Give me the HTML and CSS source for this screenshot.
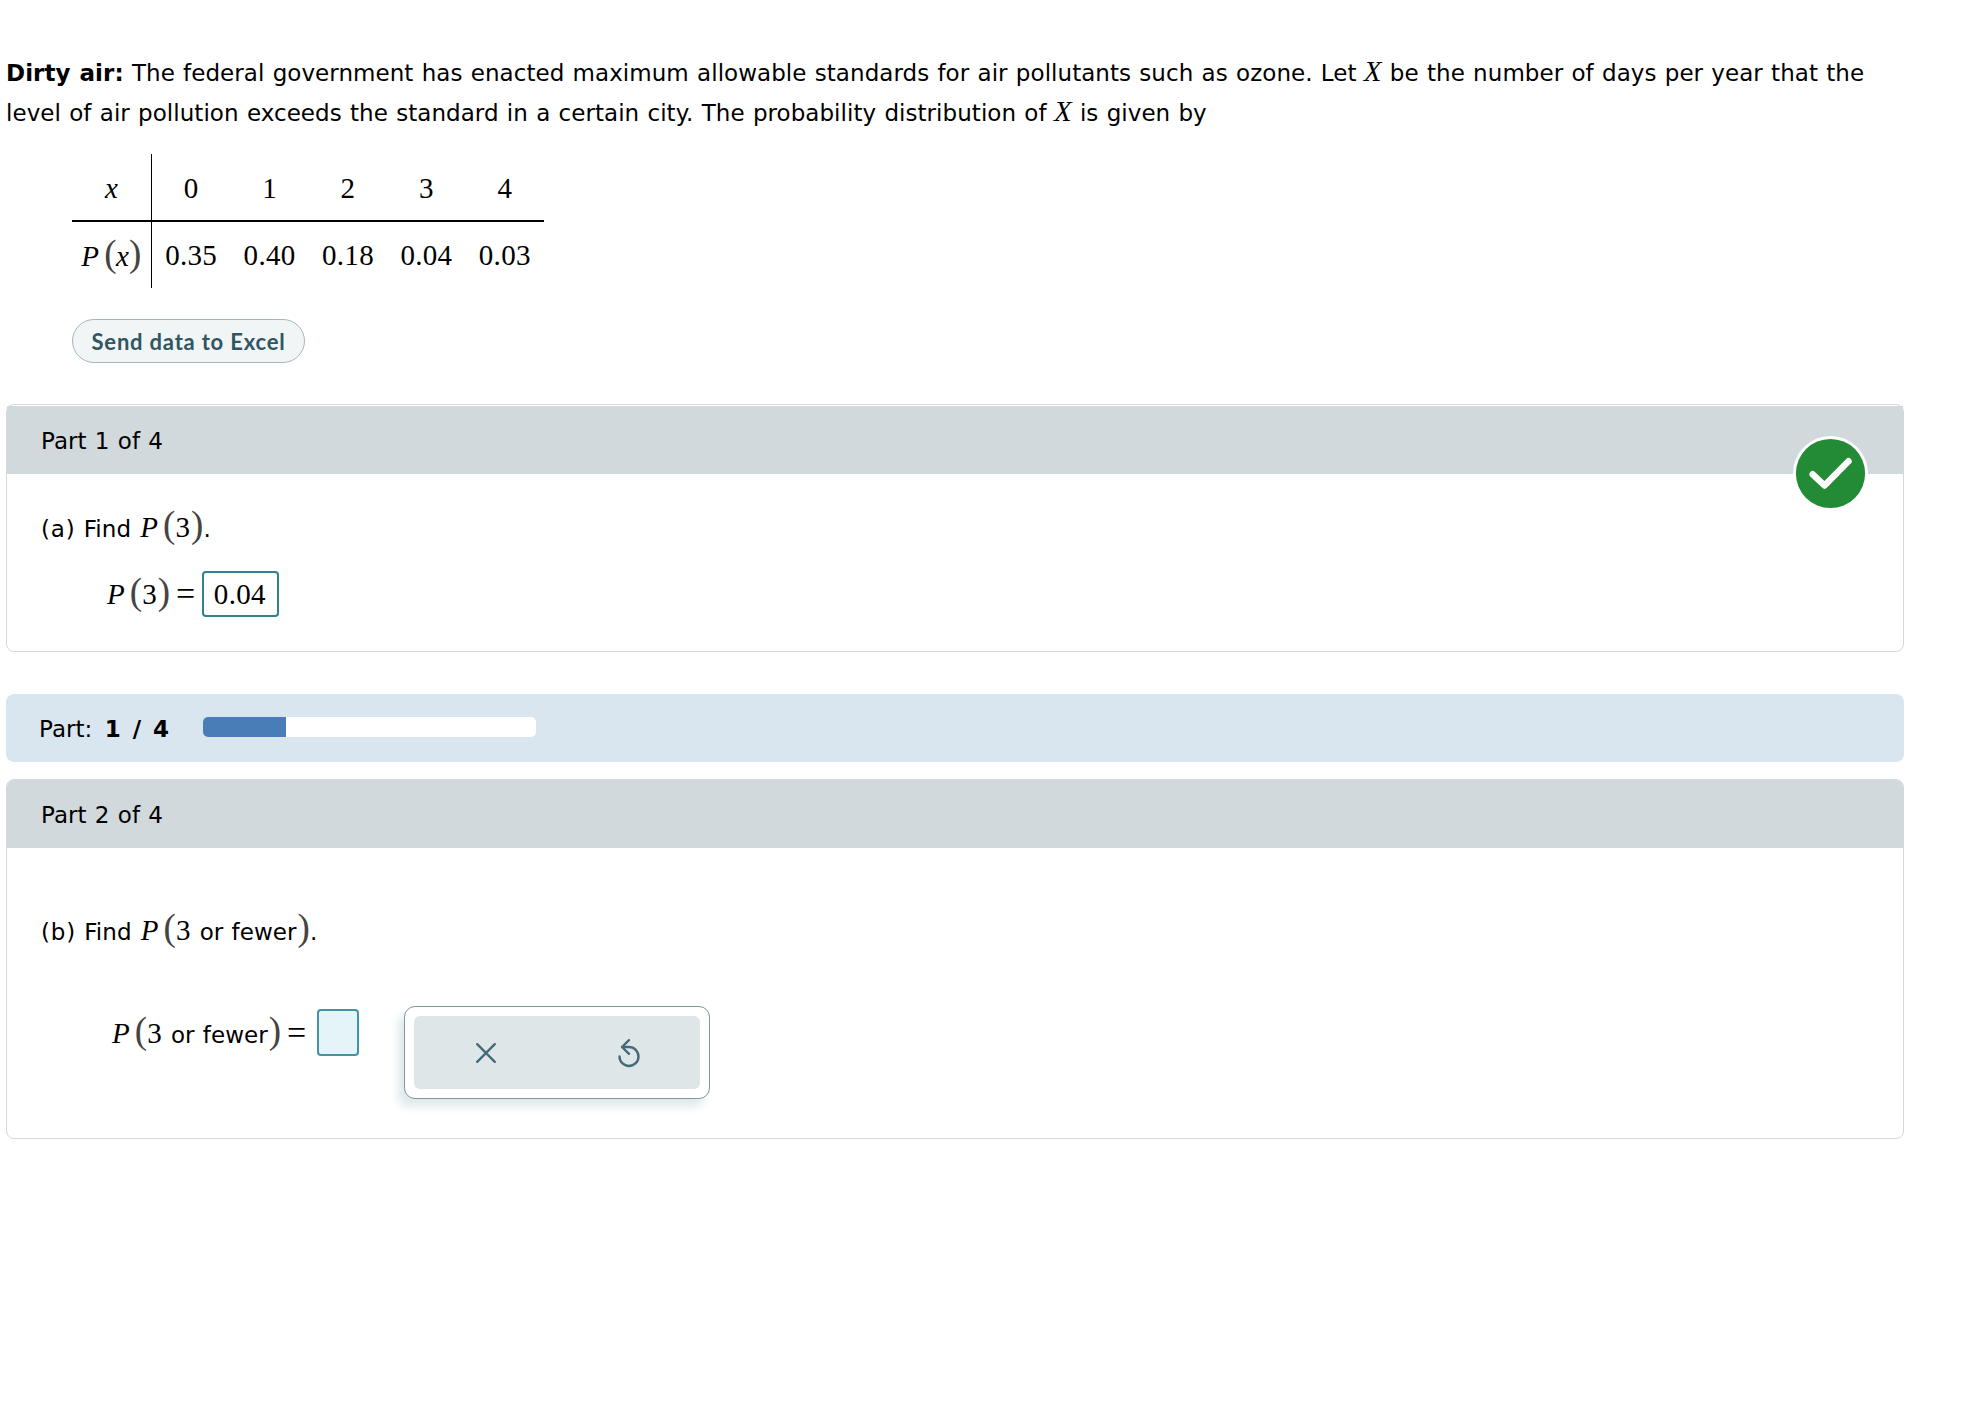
FILE: index.html
```html
<!DOCTYPE html>
<html lang="en">
<head>
<meta charset="utf-8"/>
<title>Dirty air</title>
<link rel="stylesheet" href="styles.css">
</head>
<body>
<p class="problem"><span class="line line-1"><b>Dirty air:</b> The federal government has enacted maximum allowable standards for air pollutants such as ozone. Let <i class="var">X</i> be the number of days per year that the</span>
<span class="line line-2">level of air pollution exceeds the standard in a certain city. The probability distribution of <i class="var">X</i> is given by</span></p>

<table class="dist">
<tr>
<th><i>x</i></th>
<td>0</td><td>1</td><td>2</td><td>3</td><td>4</td>
</tr>
<tr>
<th><i>P</i><span class="paren open">(</span><i>x</i><span class="paren">)</span></th>
<td>0.35</td><td>0.40</td><td>0.18</td><td>0.04</td><td>0.03</td>
</tr>
</table>

<button class="excel">Send data to Excel</button>

<section class="card card-done">
<h2 class="card-header">Part 1 of 4</h2>
<svg class="check" width="76" height="76" viewBox="0 0 76 76">
<circle cx="37.5" cy="37.5" r="37.5" fill="#fff"/>
<circle cx="37.5" cy="37.5" r="34.6" fill="#238a35"/>
<path d="M19.7 38.3L31.5 49.5L55.5 25.3" fill="none" stroke="#fff" stroke-width="6.5" stroke-linecap="round" stroke-linejoin="round"/>
</svg>
<p class="question"><span class="item">(a)</span> Find <span class="math"><i>P</i><span class="paren open">(</span>3<span class="paren close">)</span></span>.</p>
<div class="answer">
<span class="math"><i>P</i><span class="paren open">(</span>3<span class="paren close">)</span></span>
<span class="equals">=</span>
<span class="field filled">0.04</span>
</div>
</section>

<div class="progress">
<span class="progress-label">Part: <b>1 / 4</b></span>
<div class="track"><div class="bar" style="width: 25%"></div></div>
</div>

<section class="card card-current">
<h2 class="card-header">Part 2 of 4</h2>
<p class="question"><span class="item">(b)</span> Find <span class="math"><i>P</i><span class="paren open">(</span>3 <span class="words">or fewer</span><span class="paren close">)</span></span>.</p>
<div class="answer">
<span class="math"><i>P</i><span class="paren open">(</span>3 <span class="words">or fewer</span><span class="paren close">)</span></span>
<span class="equals">=</span>
<span class="field"></span>
<div class="palette">
<div class="palette-inner">
<svg class="icon" width="30" height="32" viewBox="0 0 30 32">
<path d="M6.2 7.2L23.8 24.8M23.8 7.2L6.2 24.8"/>
</svg>
<svg class="icon" width="30" height="32" viewBox="0 0 30 32">
<path d="M15 3.2L8 10L15 16.8M8 10H15A9.5 9.5 0 1 1 5.5 19.5"/>
</svg>
</div>
</div>
</div>
</section>
</body>
</html>
```
FILE: styles.css
```css
body {
    margin: 0;
    padding: 53px 66px 0 6px;
    background: #fff;
    color: #000;
    font-family: Verdana, "DejaVu Sans", sans-serif;
    font-size: 23px;
    letter-spacing: 0.05px;
    word-spacing: 0.9px;
}
p, h2 {
    margin: 0;
    font-size: 23px;
    font-weight: normal;
}
.problem {
    line-height: 40px;
}
.line {
    display: block;
    white-space: nowrap;
}
.var, .math, .equals, .dist, .field {
    font-family: "Liberation Serif", serif;
    font-size: 29px;
    line-height: 0;
}
.var {
    margin: 0 0 0 -1px;
}
.words {
    margin-left: 1px;
    font-family: Verdana, "DejaVu Sans", sans-serif;
    font-size: 23px;
}
.paren {
    color: #444;
    font-size: 37px;
    line-height: 0;
}
.open {
    margin: 0 0 0 5px;
}
.dist {
    margin: 21px 0 0 66px;
    border-spacing: 0;
    table-layout: fixed;
    width: 472px;
}
.dist th, .dist td {
    box-sizing: border-box;
    height: 66px;
    padding: 0;
    text-align: center;
    font-weight: normal;
    letter-spacing: 0.3px;
}
.dist th {
    width: 80px;
    border-right: 1px solid #000;
}
.dist .open {
    margin: 0 -1px 0 5px;
}
.dist tr:first-child th, .dist tr:first-child td {
    height: 68px;
    padding-top: 2px;
    border-bottom: 2px solid #000;
}
.excel {
    display: block;
    width: 233px;
    height: 44px;
    margin: 31px 0 0 66px;
    padding: 0;
    border: 1px solid #a3b7bc;
    border-radius: 22px;
    background: #f1f5f5;
    color: #2f5662;
    font: 700 22px Lato, sans-serif;
    letter-spacing: 0.8px;
}
.card {
    position: relative;
    box-sizing: border-box;
    border: 1px solid #d1d9dc;
    border-radius: 8px;
}
.card-header {
    height: 68px;
    padding-left: 34px;
    background: #d1d9dc;
    line-height: 70px;
}
.card-done {
    height: 248px;
    margin-top: 41px;
    padding-top: 1px;
}
.card-current {
    height: 360px;
    margin-top: 17px;
}
.card-current .card-header {
    line-height: 71px;
    border-radius: 7px 7px 0 0;
}
.check {
    position: absolute;
    top: 31px;
    right: 34px;
}
.question {
    padding: 35px 0 0 34px;
    line-height: 40px;
}
.item {
    letter-spacing: 0.8px;
}
.question .math {
    margin-left: 1px;
}
.close {
    margin-left: 1px;
}
.card-current .question {
    padding-top: 64px;
}
.answer {
    display: flex;
    align-items: center;
    height: 46px;
    margin: 22px 0 0 100px;
}
.card-done .answer .math {
    padding-bottom: 2px;
}
.equals {
    margin-left: 6px;
    font-size: 34px;
}
.field {
    display: flex;
    align-items: center;
    justify-content: center;
    box-sizing: border-box;
    width: 42px;
    height: 47px;
    margin-left: 11px;
    border: 2px solid #4394a0;
    border-radius: 4px;
    background: #e4f4f8;
}
.filled {
    width: 77px;
    height: 46px;
    margin-left: 7px;
    padding-right: 2px;
    border-color: #2f838b;
    background: #fff;
    letter-spacing: 0.3px;
}
.card-current .answer {
    align-items: flex-start;
    height: 93px;
    margin: 54px 0 0 105px;
}
.card-current .answer .math, .card-current .answer .equals {
    line-height: 54px;
}
.card-current .field {
    margin-top: 3px;
}
.progress {
    display: flex;
    align-items: center;
    height: 68px;
    margin-top: 42px;
    padding-left: 33px;
    border-radius: 8px;
    background: #dae6ef;
}
.progress-label {
    width: 164px;
    padding-top: 2px;
    white-space: nowrap;
}
.progress-label b {
    margin-left: 4px;
    word-spacing: 3px;
    letter-spacing: 0.5px;
}
.track {
    width: 333px;
    height: 20px;
    margin-bottom: 2px;
    border-radius: 5px;
    background: #fff;
    overflow: hidden;
}
.bar {
    height: 100%;
    background: #487db7;
}
.palette {
    box-sizing: border-box;
    width: 306px;
    height: 93px;
    margin-left: 45px;
    padding: 9px;
    border: 1px solid #81979e;
    border-radius: 11px;
    background: #fff;
    box-shadow: -6px 8px 10px #dfe9eb;
}
.palette-inner {
    display: flex;
    justify-content: space-around;
    align-items: center;
    height: 73px;
    border-radius: 6px;
    background: #dfe6e7;
}
.icon {
    fill: none;
    stroke: #446b7a;
    stroke-width: 2.4;
    stroke-linecap: round;
    stroke-linejoin: round;
}
```
